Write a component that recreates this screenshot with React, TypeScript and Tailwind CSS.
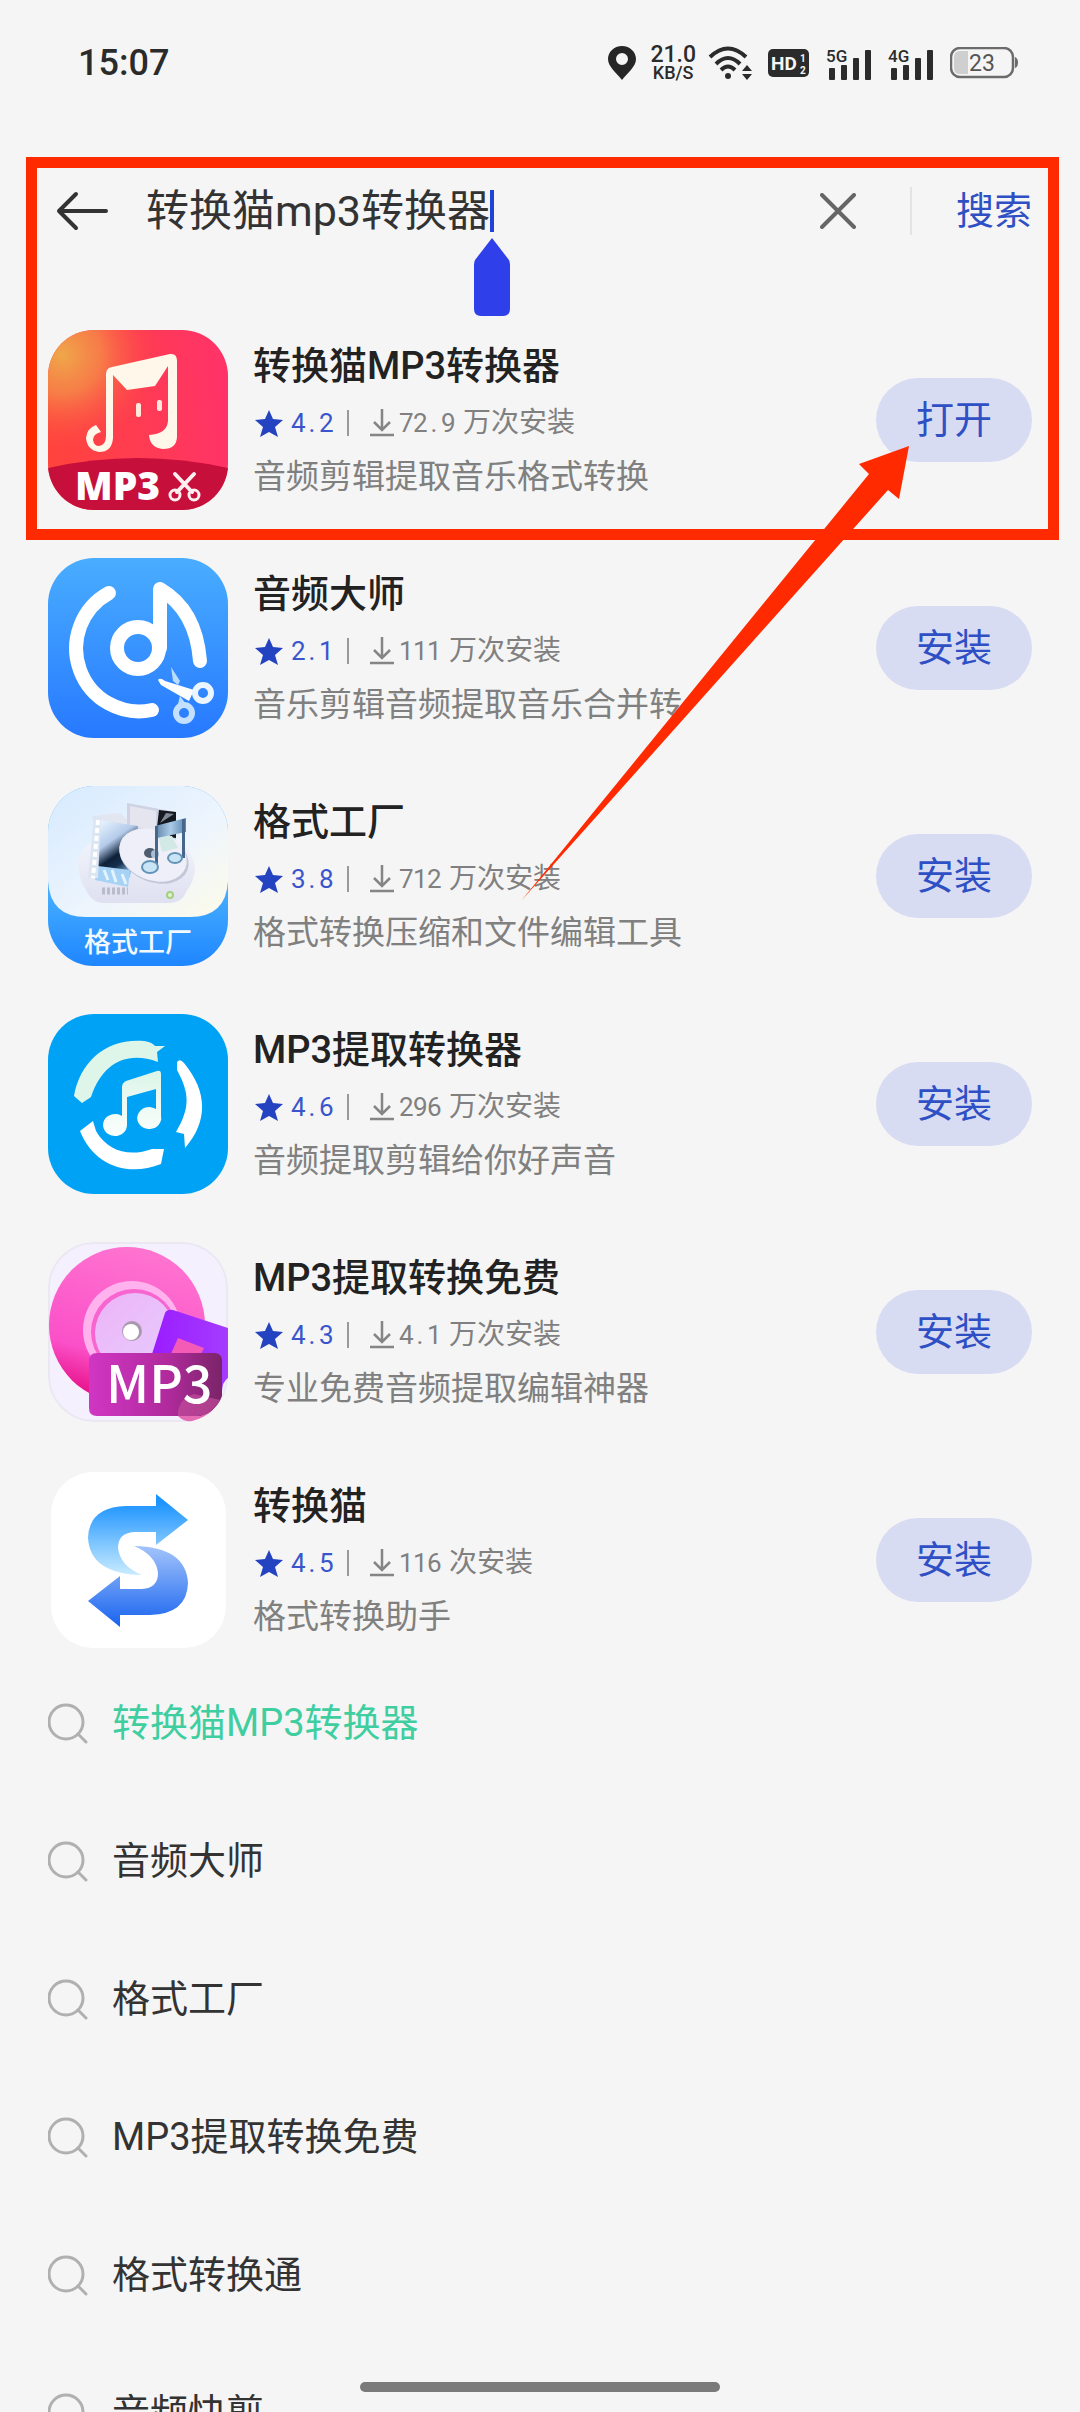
import { useState } from 'react';
import type { ReactNode } from 'react';

interface AppItem {
  name: string;
  rating: string;
  count: string;
  unit: string;
  description: string;
  action: string;
  icon: ReactNode;
}

function ConverterCatIcon() {
  return (
    <svg viewBox="0 0 180 180" className="size-full">
      <defs>
        <linearGradient id="cat-base" x1="0" y1="0.6" x2="1" y2="0.5">
          <stop offset="0" stopColor="#ff443c" />
          <stop offset="1" stopColor="#ff3368" />
        </linearGradient>
        <radialGradient id="cat-glow" cx="0.08" cy="0.14" r="0.55">
          <stop offset="0" stopColor="#efa74a" />
          <stop offset="0.4" stopColor="#f58a48" stopOpacity="0.8" />
          <stop offset="1" stopColor="#ff4040" stopOpacity="0" />
        </radialGradient>
      </defs>
      <rect width="180" height="180" fill="url(#cat-base)" />
      <rect width="180" height="180" fill="url(#cat-glow)" />
      <path d="M0 138 Q90 118 180 138 V180 H0Z" fill="#c60f3a" />
      <path d="M58 44 Q58 38 64 37 L122 24 Q129 23 129 31 V106 Q129 119 115 119 Q102 118 101 105 Q119 104 120 91 V36 L107 56 L79 60 L65 45 V108 Q64 122 51 122 Q39 120 38 108 Q39 98 48 95 L53 102 Q45 104 45 110 Q46 116 51 116 Q58 115 58 106Z" fill="#fff8ea" />
      <rect x="88" y="73" width="5" height="14" rx="2" fill="#ffe9dc" />
      <rect x="109" y="70" width="5" height="11" rx="2" fill="#ffe9dc" />
      <text x="27" y="170" fontSize="39" fontWeight="900" fill="#fff" className="font-['Open_Sans',sans-serif]">MP3</text>
      <g fill="none" stroke="#ffeef0" strokeWidth="3" strokeLinecap="round">
        <path d="M127 144 L144 162 M146 144 L129 162" strokeWidth="4" />
        <circle cx="127" cy="165" r="5" />
        <circle cx="146" cy="165" r="5" />
      </g>
    </svg>
  );
}

function AudioMasterIcon() {
  return (
    <svg viewBox="0 0 180 180" className="size-full">
      <defs>
        <linearGradient id="master-base" x1="0" y1="0" x2="0" y2="1">
          <stop offset="0" stopColor="#49adff" />
          <stop offset="1" stopColor="#2779ff" />
        </linearGradient>
      </defs>
      <rect width="180" height="180" fill="url(#master-base)" />
      <g fill="none" stroke="#fff" strokeWidth="14" strokeLinecap="round" strokeLinejoin="round">
        <path d="M61 35 A63 63 0 0 0 104 152" />
        <path d="M112 90 V31 Q148 52 152 103" />
        <circle cx="90" cy="90" r="21" />
      </g>
      <path d="M123 109 L132 123 L130 127 L125 123Z" fill="#b9dcff" />
      <path d="M132 138 L138 146 L130 146Z" fill="#b9dcff" />
      <circle cx="136" cy="155" r="8" fill="none" stroke="#c3e0ff" strokeWidth="6" />
      <path d="M110 122 Q112 119 117 123 L146 132 L141 143 L113 127Z" fill="#fff" />
      <circle cx="155" cy="135" r="8" fill="none" stroke="#eaf5ff" strokeWidth="6" />
    </svg>
  );
}

function FormatFactoryIcon() {
  return (
    <svg viewBox="0 0 180 180" className="size-full">
      <defs>
        <linearGradient id="factory-base" x1="0" y1="0.6" x2="0" y2="1">
          <stop offset="0" stopColor="#45acff" />
          <stop offset="1" stopColor="#1e86ff" />
        </linearGradient>
        <linearGradient id="factory-panel" x1="0" y1="0" x2="1" y2="1">
          <stop offset="0" stopColor="#d6eaff" />
          <stop offset="0.6" stopColor="#eef5fd" />
          <stop offset="1" stopColor="#fdfbe9" />
        </linearGradient>
        <linearGradient id="factory-drive" x1="0" y1="0" x2="0" y2="1">
          <stop offset="0" stopColor="#f3f5fc" />
          <stop offset="1" stopColor="#dfe0f0" />
        </linearGradient>
        <linearGradient id="factory-film" x1="0.2" y1="0" x2="0.7" y2="1">
          <stop offset="0" stopColor="#e6f1fd" />
          <stop offset="0.35" stopColor="#b4cbea" />
          <stop offset="0.6" stopColor="#0d2038" />
          <stop offset="0.75" stopColor="#16304e" />
          <stop offset="1" stopColor="#9fd0f4" />
        </linearGradient>
        <linearGradient id="factory-beam" x1="0" y1="0" x2="1" y2="0">
          <stop offset="0" stopColor="#5f83a6" />
          <stop offset="0.5" stopColor="#a9cbe8" />
          <stop offset="1" stopColor="#5b87b0" />
        </linearGradient>
      </defs>
      <rect width="180" height="180" fill="url(#factory-base)" />
      <path d="M0 0 H180 V95 Q178 131 142 131 H38 Q2 131 0 95Z" fill="url(#factory-panel)" />
      <path d="M30 74 Q38 52 62 50 H122 Q142 56 147 82 Q146 96 138 106 Q134 117 120 117 H56 Q44 117 38 104 Q30 92 30 74Z" fill="url(#factory-drive)" />
      <path d="M44 30 L72 27 L80 34 V60 H50Z" fill="#e2e6f1" />
      <path d="M79 17 L128 26 V56 L79 46Z" fill="#cfd2e2" />
      <path d="M82 20 L108 25 V44 L82 40Z" fill="#e4e5ef" />
      <path d="M111 24 L128 26 V52 L108 50Z" fill="#15191f" />
      <path d="M118 27 L126 28 L112 37Z" fill="#7f8894" />
      <path d="M52 34 L90 40 L82 92 L48 84Z" fill="url(#factory-film)" />
      <path d="M50 80 L82 84 L80 101 L47 94Z" fill="#a5d2f5" />
      <path d="M56 84 L60 94 M64 84 L68 96 M74 88 L78 98" stroke="#e3f4ff" strokeWidth="3" />
      <path d="M46 30 H53 L50 92 H40Z" fill="#dce5f2" />
      <path d="M50 34 L45 92" stroke="#fff" strokeWidth="4" strokeDasharray="5 3" />
      <path d="M54 105 H80" stroke="#b8bccb" strokeWidth="7" strokeDasharray="3 2" />
      <ellipse cx="106" cy="71" rx="36" ry="25" transform="rotate(22 106 71)" fill="#c3c8d8" />
      <ellipse cx="105" cy="69" rx="35" ry="25" transform="rotate(22 105 69)" fill="#eeeff8" />
      <path d="M110 50 L124 50 L130 62 L114 66Z" fill="#d3e9e6" />
      <ellipse cx="102" cy="67" rx="6" ry="5" fill="#4e5d70" />
      <ellipse cx="107" cy="68" rx="4" ry="4" fill="#a9bfd6" />
      <path d="M107 40 L138 32 V46 L109 52Z" fill="url(#factory-beam)" />
      <path d="M107 40 h3 v41 h-3Z M134 33 h3 v39 h-3Z" fill="#47678a" />
      <ellipse cx="102" cy="81" rx="8" ry="6" fill="#c9e5f5" stroke="#6293b8" strokeWidth="2" />
      <ellipse cx="127" cy="72" rx="7" ry="5" fill="#c9e5f5" stroke="#6293b8" strokeWidth="2" />
      <circle cx="122" cy="109" r="3" fill="#e1f3c8" stroke="#a6cf86" strokeWidth="2" />
      <text x="90" y="166" textAnchor="middle" fontSize="27" fontWeight="500" fill="#f2f9ff" className="font-['Noto_Sans_CJK_SC',sans-serif]">格式工厂</text>
    </svg>
  );
}

function ExtractConvertIcon() {
  return (
    <svg viewBox="0 0 180 180" className="size-full">
      <defs>
        <linearGradient id="extract-note" x1="0" y1="0" x2="0" y2="1">
          <stop offset="0" stopColor="#dcf5e8" />
          <stop offset="1" stopColor="#fbfffd" />
        </linearGradient>
      </defs>
      <rect width="180" height="180" fill="#00a2f6" />
      <path d="M26 82 C32 48 58 24 96 27 Q104 28 107 32 L117 32 L109 38 L110 48 C78 36 54 50 43 83 L34 89Z" fill="#def6e9" />
      <path d="M129 48 Q132 44 136 49 C160 78 160 108 137 134 L136 120 L128 118 C142 94 142 80 129 56Z" fill="#fff" />
      <path d="M45 107 L48 117 C60 138 82 143 104 135 L116 135 L113 150 C80 163 46 152 32 117Z" fill="#fff" />
      <path d="M74 73 Q74 69 78 67 L109 57 Q113 56 113 60 V102 A12 11 0 1 1 108 95 V75 L79 83 V110 A12 11 0 1 1 74 102Z" fill="url(#extract-note)" />
    </svg>
  );
}

function ExtractFreeIcon() {
  return (
    <svg viewBox="0 0 180 180" className="size-full">
      <defs>
        <linearGradient id="free-disc" x1="0.6" y1="0" x2="0.3" y2="1">
          <stop offset="0" stopColor="#ff74d0" />
          <stop offset="0.7" stopColor="#fb50c8" />
          <stop offset="0.95" stopColor="#e8148c" />
        </linearGradient>
        <linearGradient id="free-label" x1="0" y1="0" x2="1" y2="1">
          <stop offset="0" stopColor="#edb4f6" />
          <stop offset="1" stopColor="#e6ccff" />
        </linearGradient>
        <linearGradient id="free-note" x1="0" y1="0" x2="1" y2="0">
          <stop offset="0" stopColor="#9a1cff" />
          <stop offset="1" stopColor="#a53cff" />
        </linearGradient>
        <linearGradient id="free-card" x1="0" y1="0" x2="1" y2="0">
          <stop offset="0" stopColor="#d036c4" />
          <stop offset="0.6" stopColor="#b02a9c" />
          <stop offset="1" stopColor="#7a2468" />
        </linearGradient>
      </defs>
      <rect width="180" height="180" fill="#f4f0fd" />
      <rect x="1" y="1" width="178" height="178" rx="45" fill="none" stroke="#ebe8f2" strokeWidth="2" />
      <circle cx="79" cy="83" r="78" fill="url(#free-disc)" />
      <circle cx="84" cy="88" r="49" fill="#ffb2ee" />
      <circle cx="86" cy="90" r="43" fill="#f765d0" />
      <circle cx="87" cy="91" r="40" fill="url(#free-label)" />
      <circle cx="84" cy="89" r="10" fill="#a999ae" />
      <circle cx="83" cy="90" r="8" fill="#fff" />
      <path d="M117 71 Q119 67 125 68 L180 86 V136 Q174 140 174 150 L160 112 H104Z" fill="url(#free-note)" />
      <path d="M130 96 L156 106 L152 114 H122Z" fill="#f45bb6" />
      <ellipse cx="146" cy="167" rx="19" ry="13" fill="#e46bb4" />
      <path d="M49 111 H166 Q174 111 174 119 V154 Q168 170 152 174 H49 Q41 174 41 166 V119 Q41 111 49 111Z" fill="url(#free-card)" />
      <path d="M130 170 Q132 156 146 152 L172 158 Q164 172 150 174 H130Z" fill="#c9529f" opacity="0.6" />
      <text x="58" y="161" fontSize="52" fontWeight="500" fill="#fff" className="font-['Noto_Sans_CJK_SC',sans-serif]">MP3</text>
    </svg>
  );
}

function SwapIcon() {
  return (
    <svg viewBox="0 0 180 180" className="size-full">
      <defs>
        <linearGradient id="swap-top" x1="0" y1="0" x2="0" y2="1">
          <stop offset="0.1" stopColor="#1c93ff" />
          <stop offset="1" stopColor="#c9ecff" />
        </linearGradient>
        <linearGradient id="swap-bottom" x1="0" y1="0" x2="0" y2="1">
          <stop offset="0" stopColor="#a3c4fb" />
          <stop offset="1" stopColor="#1763ef" />
        </linearGradient>
      </defs>
      <rect x="3" y="2" width="175" height="176" rx="42" fill="#fff" />
      <path d="M108 24 L140 50 L108 75 V62 H86 Q70 63 70 78 Q72 96 94 105 Q42 104 40 68 Q41 37 78 36 H108Z" fill="url(#swap-top)" />
      <path d="M72 157 L40 131 L72 106 V119 H94 Q110 118 110 103 Q108 85 86 76 Q138 77 140 113 Q139 144 102 145 H72Z" fill="url(#swap-bottom)" />
    </svg>
  );
}

const apps: AppItem[] = [
  { name: '转换猫MP3转换器', rating: '4.2', count: '72.9', unit: '万次安装', description: '音频剪辑提取音乐格式转换', action: '打开', icon: <ConverterCatIcon /> },
  { name: '音频大师', rating: '2.1', count: '111', unit: '万次安装', description: '音乐剪辑音频提取音乐合并转', action: '安装', icon: <AudioMasterIcon /> },
  { name: '格式工厂', rating: '3.8', count: '712', unit: '万次安装', description: '格式转换压缩和文件编辑工具', action: '安装', icon: <FormatFactoryIcon /> },
  { name: 'MP3提取转换器', rating: '4.6', count: '296', unit: '万次安装', description: '音频提取剪辑给你好声音', action: '安装', icon: <ExtractConvertIcon /> },
  { name: 'MP3提取转换免费', rating: '4.3', count: '4.1', unit: '万次安装', description: '专业免费音频提取编辑神器', action: '安装', icon: <ExtractFreeIcon /> },
  { name: '转换猫', rating: '4.5', count: '116', unit: '次安装', description: '格式转换助手', action: '安装', icon: <SwapIcon /> },
];

const suggestions = ['转换猫MP3转换器', '音频大师', '格式工厂', 'MP3提取转换免费', '格式转换通', '音频快剪'];

// Signal bars with the network generation above the short ones
function Signal({ label }: { label: string }) {
  return (
    <svg viewBox="0 0 46 36" className="h-9 w-[46px]" fill="#2b2b2b">
      <rect x="3" y="23" width="6" height="12" rx="1" />
      <rect x="15" y="20" width="6" height="15" rx="1" />
      <rect x="27" y="13" width="6" height="22" rx="1" />
      <rect x="39" y="5" width="6" height="30" rx="1" />
      <text x="0" y="17" fontSize="17" fontWeight="500" className="font-[Roboto,sans-serif]">{label}</text>
    </svg>
  );
}

function StatusBar() {
  return (
    <div className="flex h-[122px] items-center justify-between pt-1 pr-[62px] pl-[78px] text-[#2b2b2b]">
      <span className="text-4xl font-medium">15:07</span>
      <div className="flex items-center">
        <svg viewBox="0 0 28 34" className="h-[34px] w-7">
          <path fillRule="evenodd" d="M14 0 C22 0 28 6 28 13 C28 21 19 27 14 34 C9 27 0 21 0 13 C0 6 6 0 14 0Z M14 7 A6 6 0 1 0 14 19 A6 6 0 1 0 14 7Z" fill="#262626" />
        </svg>
        <div className="ml-3.5 flex flex-col items-center font-medium">
          <span className="text-[23px] leading-5">21.0</span>
          <span className="text-lg leading-4">KB/S</span>
        </div>
        <svg viewBox="0 0 46 34" className="ml-3 h-[34px] w-[46px]" fill="none" stroke="#2b2b2b" strokeWidth="4">
          <path d="M2 11 Q20 -6 38 11" />
          <path d="M8 18 Q20 6 32 18" />
          <path d="M13 24 Q20 17 27 24" />
          <circle cx="20" cy="30" r="3" fill="#2b2b2b" stroke="none" />
          <path d="M34 25 L39 19 L44 25Z M34 28 L39 34 L44 28Z" fill="#2b2b2b" stroke="none" />
        </svg>
        <svg viewBox="0 0 42 30" className="ml-3.5 h-[30px] w-[42px]">
          <rect x="0" y="1" width="41" height="28" rx="5" fill="#2b2b2b" />
          <g fill="#f5f5f5" className="font-[Roboto,sans-serif]">
            <text x="3" y="22" fontSize="19" fontWeight="700">HD</text>
            <text x="32" y="14" fontSize="10" fontWeight="700">1</text>
            <text x="32" y="26" fontSize="10" fontWeight="700">2</text>
          </g>
        </svg>
        <span className="ml-4"><Signal label="5G" /></span>
        <span className="ml-4"><Signal label="4G" /></span>
        <svg viewBox="0 0 68 32" className="ml-4 h-8 w-[68px]">
          <rect x="1" y="1" width="62" height="29" rx="9" fill="none" stroke="#6b6b6b" strokeWidth="2.5" />
          <path d="M10 4 H18 V27 H10 Q4 27 4 21 V10 Q4 4 10 4Z" fill="#cfcfcf" />
          <path d="M65 10 Q68 11 68 16 Q68 20 65 21Z" fill="#6b6b6b" />
          <text x="32" y="24" textAnchor="middle" fontSize="23" fill="#555" className="font-[Roboto,sans-serif]">23</text>
        </svg>
      </div>
    </div>
  );
}

function SearchHeader() {
  const [query, setQuery] = useState('转换猫mp3转换器');

  return (
    <header className="flex h-[178px] items-center pr-12 pl-14">
      <button type="button" aria-label="返回">
        <svg viewBox="0 0 52 40" className="h-10 w-[52px]" fill="none" stroke="#333" strokeWidth="4" strokeLinecap="round" strokeLinejoin="round">
          <path d="M50 20 H3 M20 3 L3 20 L20 37" />
        </svg>
      </button>
      <div className="ml-[38px] flex flex-1 items-center">
        <input
          type="text"
          aria-label="搜索应用"
          value={query}
          onChange={(e) => setQuery(e.target.value)}
          className="field-sizing-content bg-transparent p-0 text-[43px] leading-[60px] text-[#333] caret-transparent outline-none"
        />
        {/* Caret with its drag handle */}
        <span className="relative h-[42px] w-1 bg-[#1f43d6]">
          <svg viewBox="0 0 36 78" className="absolute top-12 -left-4 h-[78px] w-9">
            <path d="M18 0 L35 22 Q36 24 36 27 V71 Q36 78 29 78 H7 Q0 78 0 71 V27 Q0 24 1 22Z" fill="#2f3fea" />
          </svg>
        </span>
      </div>
      <button type="button" aria-label="清除" onClick={() => setQuery('')}>
        <svg viewBox="0 0 36 36" className="size-9" stroke="#666" strokeWidth="4" strokeLinecap="round">
          <path d="M2 2 L34 34 M34 2 L2 34" />
        </svg>
      </button>
      <span className="ml-[54px] h-12 w-0.5 bg-[#e4e4e4]" />
      <button type="submit" className="ml-11 text-[38px] leading-[54px] text-[#2f50c4]">搜索</button>
    </header>
  );
}

// Digits and the decimal point share one column width
function Figures({ value }: { value: string }) {
  return (
    <span className="flex">
      {value.split('').map((char, i) => (
        <span key={i} className="w-3.5 text-center">{char}</span>
      ))}
    </span>
  );
}

function AppRow({ app }: { app: AppItem }) {
  return (
    <li className="flex items-center">
      <div className="size-[180px] shrink-0 overflow-hidden rounded-[46px]">{app.icon}</div>
      <div className="ml-[25px] flex min-w-0 flex-1 flex-col">
        <h2 className="truncate text-[38px] leading-[54px] font-medium text-[#222]">{app.name}</h2>
        <div className="flex h-[60px] items-center text-[26px] text-[#808080]">
          <svg viewBox="0 0 28 27" className="ml-0.5 h-[27px] w-7">
            <path d="M14 0 L18 9 L28 10 L20 17 L23 27 L14 22 L5 27 L8 17 L0 10 L10 9Z" fill="#2343c0" />
          </svg>
          <span className="ml-2 text-[#3a55cc]"><Figures value={app.rating} /></span>
          <span className="ml-3.5 h-[26px] w-0.5 bg-[#999]" />
          <svg viewBox="0 0 26 28" className="ml-5 h-7 w-[26px]" fill="none" stroke="#858585" strokeWidth="2.5">
            <path d="M13 0 V20 M5 13 L13 21 L21 13 M1 26 H25" />
          </svg>
          <span className="ml-1"><Figures value={app.count} /></span>
          <span className="ml-2 text-[28px]">{app.unit}</span>
        </div>
        <p className="truncate text-[33px] leading-[48px] text-[#808080]">{app.description}</p>
      </div>
      <button type="button" className="h-[84px] w-[156px] shrink-0 rounded-full bg-[#d8dcf3] text-[38px] text-[#2f50c4]">
        {app.action}
      </button>
    </li>
  );
}

export default function App() {
  return (
    <main className="relative h-screen overflow-hidden bg-[#f5f5f5] font-[Roboto,'Noto_Sans_CJK_SC',sans-serif]">
      <StatusBar />
      <SearchHeader />

      <ul className="flex flex-col gap-12 px-12 pt-[30px]">
        {apps.map((app) => (
          <AppRow key={app.name} app={app} />
        ))}
      </ul>

      <ul className="px-12 pt-1">
        {suggestions.map((text, i) => (
          <li key={text}>
            <a href="#" className="flex h-[138px] items-center gap-[22px]">
              <svg viewBox="0 0 42 42" className="size-[42px]" fill="none" stroke="#b0b0b0" strokeWidth="3" strokeLinecap="round">
                <circle cx="18" cy="20" r="17" />
                <path d="M30 32 L38 40" />
              </svg>
              <span className={i === 0 ? 'text-[38px] text-[#3fce9f]' : 'text-[38px] text-[#333]'}>{text}</span>
            </a>
          </li>
        ))}
      </ul>

      {/* Callout around the search field and the first result */}
      <div className="pointer-events-none absolute top-[157px] right-[21px] left-[26px] h-[383px] border-[11px] border-[#ff2a00]" />
      <svg viewBox="0 0 388 455" className="pointer-events-none absolute top-[446px] right-[171px] h-[455px] w-[388px]">
        <path d="M388 0 L338 18 L348 28 L0 455 L367 44 L378 53Z" fill="#ff2a00" />
      </svg>

      <div className="absolute bottom-5 left-1/3 h-2.5 w-1/3 rounded-full bg-[#7a7a7a]" />
    </main>
  );
}
